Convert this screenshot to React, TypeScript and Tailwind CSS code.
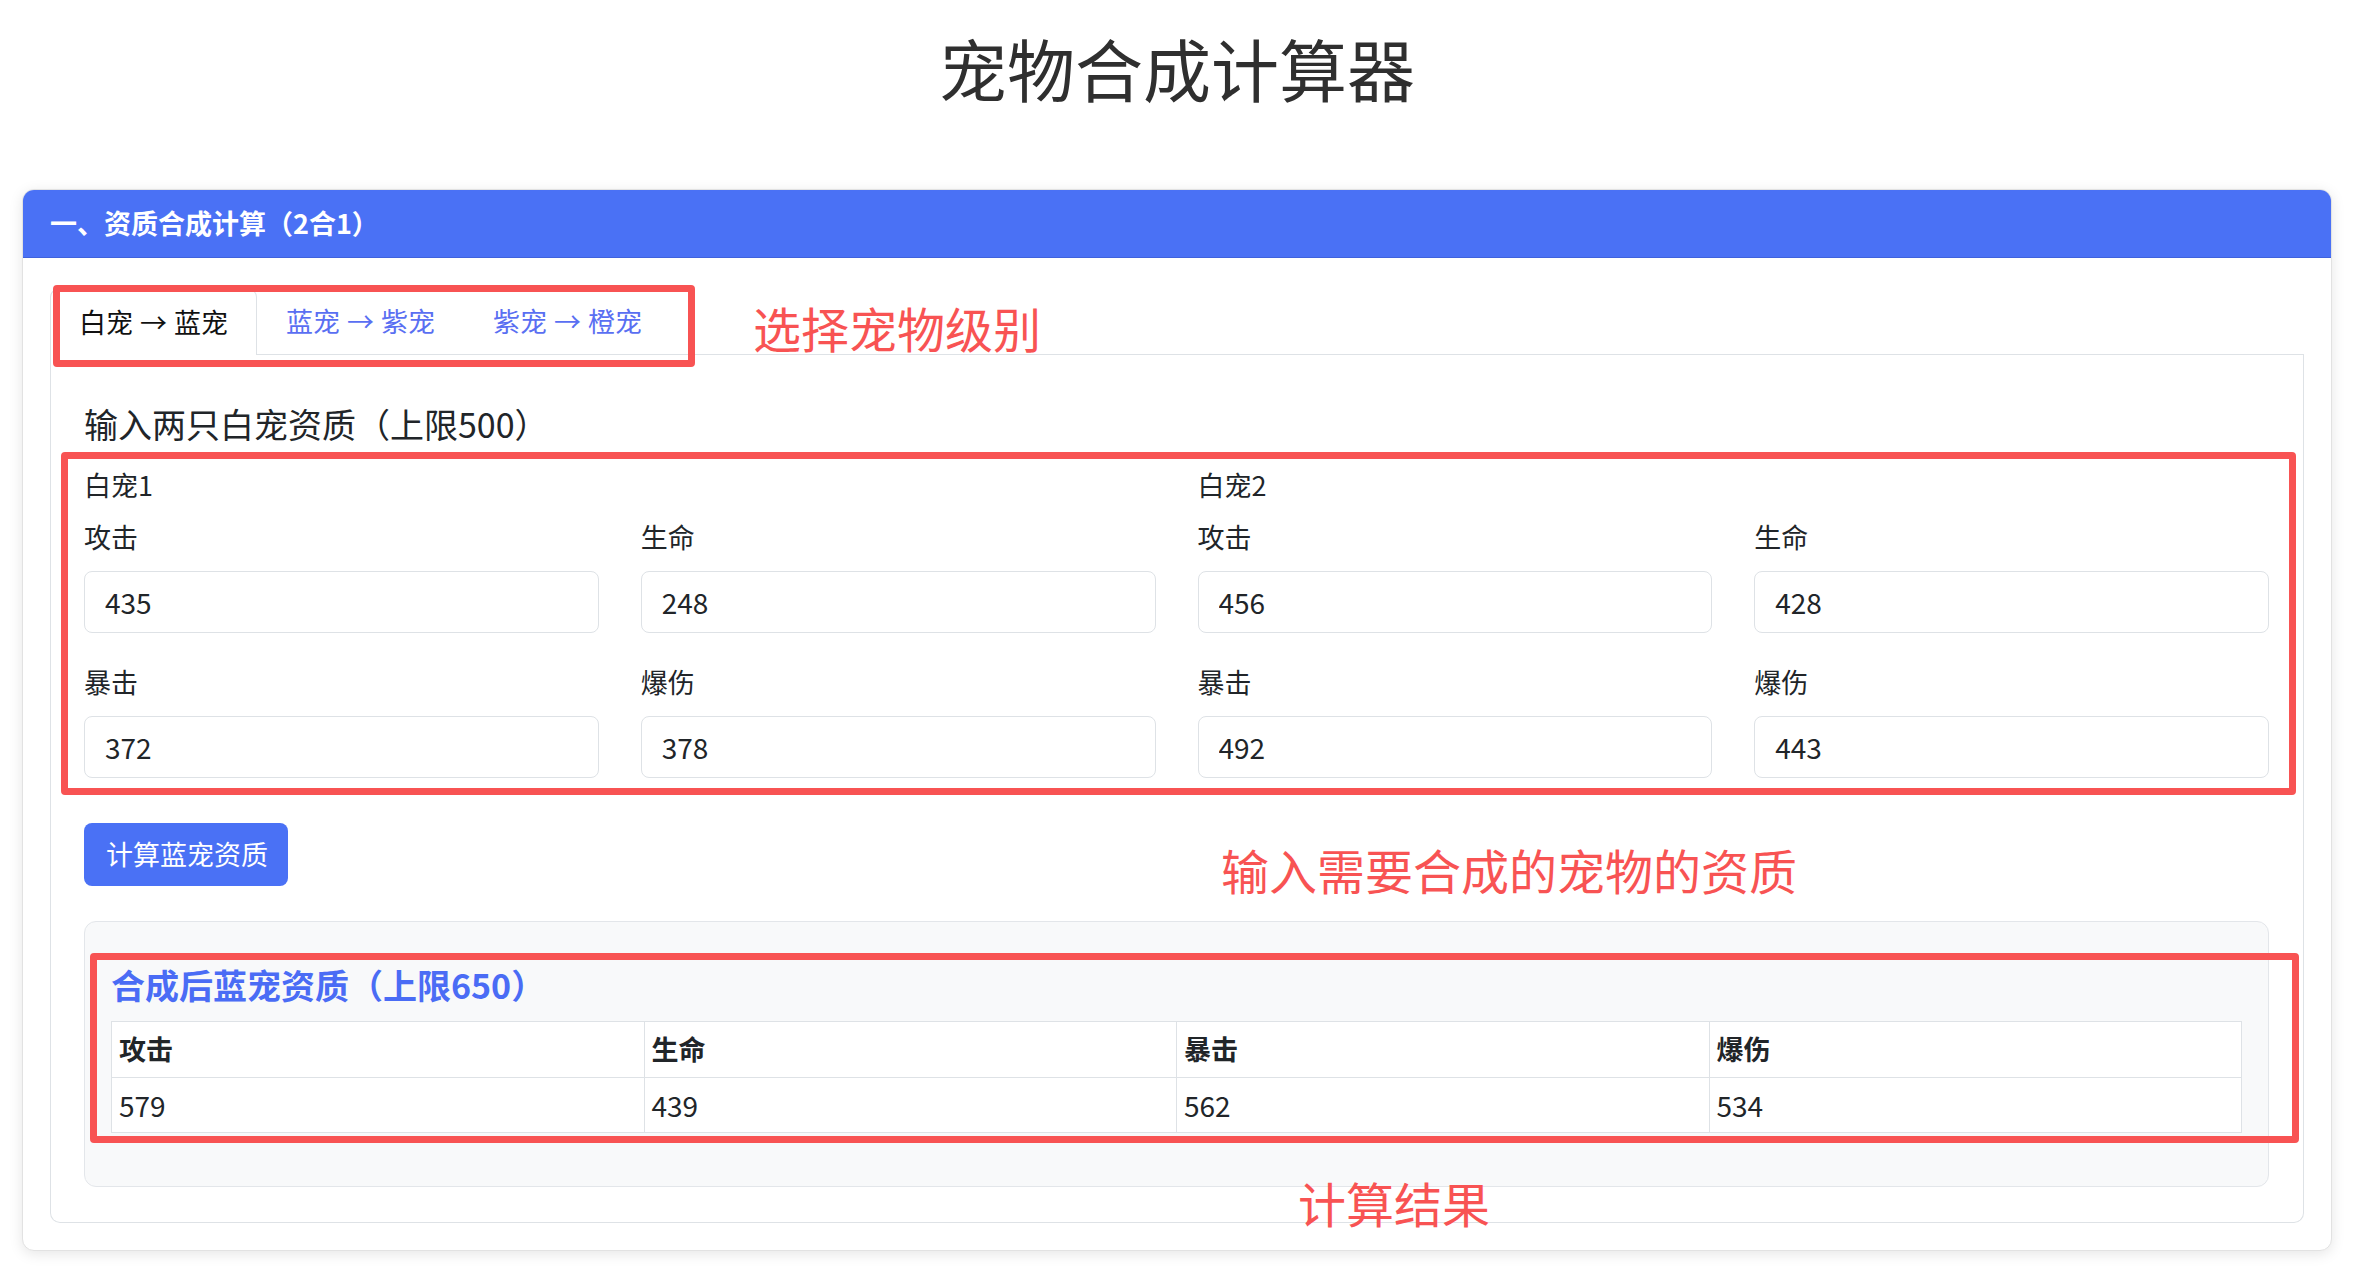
import React from "react";

const FONT = { fontFamily: '"Noto Sans CJK SC", "Noto Sans", "Liberation Sans", sans-serif' };

const pets = [
  { name: "白宠1", values: ["435", "248", "372", "378"] },
  { name: "白宠2", values: ["456", "428", "492", "443"] },
];
const labels = ["攻击", "生命", "暴击", "爆伤"];
const results = ["579", "439", "562", "534"];

function Field({ label, value }: { label: string; value: string }) {
  return (
    <div className="flex flex-col">
      <label className="text-[27px] leading-[40px] text-[#212529]">{label}</label>
      <input
        defaultValue={value}
        className="mt-[14px] h-[62px] w-full rounded-[8px] border border-[#dee2e6] bg-white pl-[20px] text-[28px] text-[#212529] outline-none"
        style={FONT}
      />
    </div>
  );
}

function TabText({ from, to }: { from: string; to: string }) {
  return (
    <span className="whitespace-nowrap">
      {from}
      <span className="mx-[7px]">→</span>
      {to}
    </span>
  );
}

export default function App() {
  return (
    <div className="min-h-screen bg-white pl-[22px] pr-[26px]" style={FONT}>
      <h1 className="pt-[27px] text-center text-[68px] font-normal leading-[82px] text-[#2f2f2f]">
        宠物合成计算器
      </h1>

      <div className="mt-[80px] overflow-hidden rounded-[12px] border border-[#e2e2e2] bg-white shadow-[0_3px_14px_rgba(0,0,0,0.10)]">
        <div className="flex h-[68px] items-center border-b border-[#3f62dc] bg-[#4a71f5] px-[27px] text-[27px] font-bold text-white">
          一、资质合成计算（2合1）
        </div>

        <div className="px-[27px] pb-[27px] pt-[31px]">
          {/* tabs */}
          <div className="relative flex border-b border-[#dee2e6]">
            <div className="-mb-px flex h-[66px] items-center rounded-t-[8px] border border-b-0 border-[#dee2e6] bg-white px-[28px] text-[27px] text-[#111]">
              <TabText from="白宠" to="蓝宠" />
            </div>
            <div className="flex h-[65px] items-center px-[29px] text-[27px] text-[#5a6ff2]">
              <TabText from="蓝宠" to="紫宠" />
            </div>
            <div className="flex h-[65px] items-center px-[29px] text-[27px] text-[#5a6ff2]">
              <TabText from="紫宠" to="橙宠" />
            </div>
            <div className="pointer-events-none absolute left-[3px] top-[-4px] h-[82px] w-[642px] rounded-[4px] border-[7px] border-[#f85353]" />
            <div className="pointer-events-none absolute left-[703px] top-[9px] whitespace-nowrap text-[48px] leading-[58px] text-[#f85353]">
              选择宠物级别
            </div>
          </div>

          {/* panel */}
          <div className="rounded-b-[10px] border border-t-0 border-[#dee2e6] pb-[35px] pl-[33px] pr-[34px] pt-[49px]">
            <h3 className="text-[34px] font-normal leading-[40px] text-[#212529]">输入两只白宠资质（上限500）</h3>

            <div className="relative mt-[21px] grid grid-cols-2 gap-x-[42px]">
              {pets.map((p) => (
                <div key={p.name} className="flex flex-col">
                  <div className="text-[27px] leading-[40px] text-[#212529]">{p.name}</div>
                  <div className="mt-[12px] grid grid-cols-2 gap-x-[42px] gap-y-[29px]">
                    {labels.map((l, i) => (
                      <Field key={l} label={l} value={p.values[i]} />
                    ))}
                  </div>
                </div>
              ))}
              <div className="pointer-events-none absolute bottom-[-17px] left-[-23px] right-[-27px] top-[-13px] rounded-[4px] border-[7px] border-[#f85353]" />
            </div>

            <div className="relative mt-[45px] flex">
              <button
                className="h-[63px] rounded-[8px] bg-[#4a71f5] pl-[22px] pr-[20px] text-[27px] text-white"
                style={FONT}
              >
                计算蓝宠资质
              </button>
              <div className="pointer-events-none absolute left-[1137px] top-[17px] whitespace-nowrap text-[48px] leading-[58px] text-[#f85353]">
                输入需要合成的宠物的资质
              </div>
            </div>

            <div className="relative mt-[35px] rounded-[12px] border border-[#e3e6ea] bg-[#f8f9fa] px-[26px] pb-[53px] pt-[43px]">
              <div className="text-[34px] font-bold leading-[40px] text-[#4a6cf5]">合成后蓝宠资质（上限650）</div>
              <table className="mt-[16px] w-full table-fixed border-collapse bg-white text-[27px] text-[#212529]">
                <thead>
                  <tr>
                    {labels.map((l) => (
                      <th key={l} className="h-[56px] border border-[#dee2e6] px-[7px] text-left font-bold">
                        {l}
                      </th>
                    ))}
                  </tr>
                </thead>
                <tbody>
                  <tr>
                    {results.map((r, i) => (
                      <td key={i} className="h-[55px] border border-[#dee2e6] px-[7px] text-[28px]">
                        {r}
                      </td>
                    ))}
                  </tr>
                </tbody>
              </table>
              <div className="pointer-events-none absolute bottom-[43px] left-[5px] right-[-31px] top-[31px] rounded-[4px] border-[7px] border-[#f85353]" />
              <div className="pointer-events-none absolute left-[1213px] top-[251px] whitespace-nowrap text-[48px] leading-[58px] text-[#f85353]">
                计算结果
              </div>
            </div>
          </div>
        </div>
      </div>
    </div>
  );
}
